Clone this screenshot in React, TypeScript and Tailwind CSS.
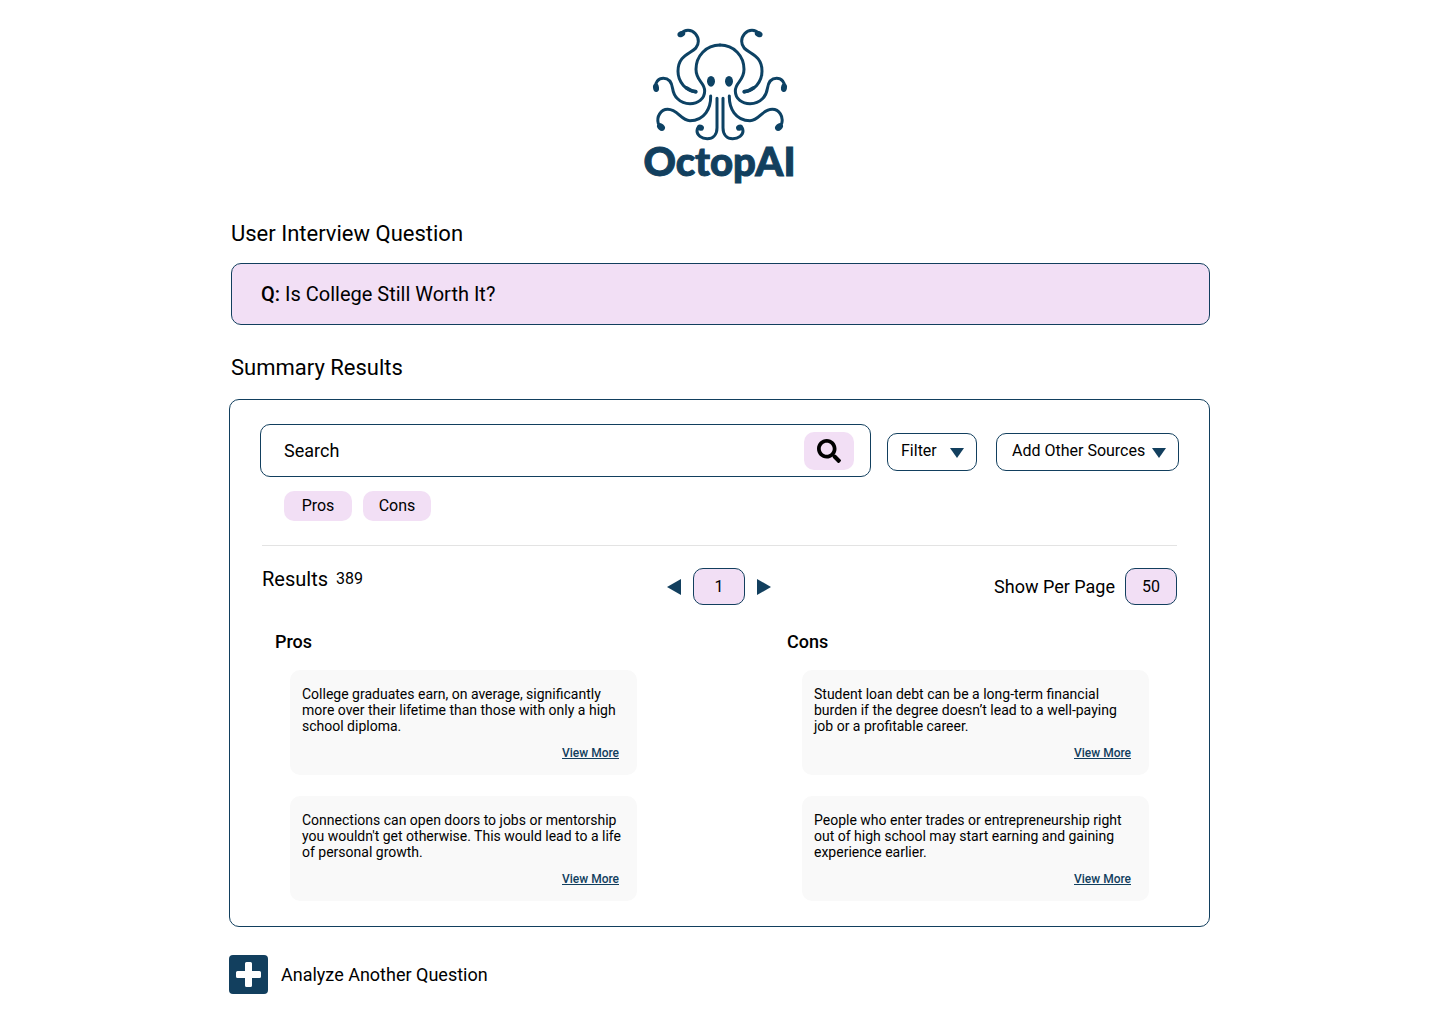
import React from "react";
import { FaSearch } from "react-icons/fa";

function Tentacles() {
  return (
    <g>
      <path d="M240 75C198 75 168 108 168 148C168 184 194 186 194 213C194 237 173 251 150 251C117 251 101 227 98 206C95 186 86 175 70 175C55 175 45 187 46 203" />
      <path d="M124 41C130 33 137 31 144 31C162 31 175 47 175 64C175 104 114 92 114 154C114 188 139 212 168 216" />
      <path d="M167 215C157 214 148 210 140 204" strokeWidth="11" />
      <path d="M212 228C213 264 194 302 150 302C122 302 114 268 83 268C62 268 49 290 55 311" />
      <path d="M231 235V323C231 345 218 356 202 356C184 356 171 345 171 333C171 326 175 322 182 322" />
      <ellipse cx="124" cy="42" rx="12" ry="9" transform="rotate(-24 124 42)" fill="#0d4264" stroke="none" />
      <ellipse cx="48" cy="203" rx="9" ry="13" transform="rotate(-8 48 203)" fill="#0d4264" stroke="none" />
      <ellipse cx="63" cy="321" rx="10" ry="13" transform="rotate(-48 63 321)" fill="#0d4264" stroke="none" />
      <ellipse cx="181" cy="323" rx="11" ry="9" transform="rotate(20 181 323)" fill="#0d4264" stroke="none" />
      <ellipse cx="213" cy="184" rx="12" ry="16" fill="#0d4264" stroke="none" />
    </g>
  );
}

function Logo() {
  return (
    <div className="flex flex-col items-center text-[#123f5e]">
      <svg viewBox="0 0 480 366" className="h-[122px] w-40" fill="none" stroke="#0d4264" strokeWidth="9" strokeLinecap="round" aria-hidden="true">
        <Tentacles />
        <g transform="translate(480 0) scale(-1 1)">
          <Tentacles />
        </g>
      </svg>
      <h1 className="-mt-[5px] font-['Lato',sans-serif] text-[40px] leading-[48px] font-black [-webkit-text-stroke:1px_#123f5e]">OctopAI</h1>
    </div>
  );
}

function Triangle({ direction }: { direction: "down" | "left" | "right" }) {
  const points = { down: "0,2 14,2 7,12", left: "14,0 14,16 0,8", right: "0,0 0,16 14,8" };
  return (
    <svg viewBox={direction === "down" ? "0 0 14 14" : "0 0 14 16"} className="w-3.5" fill="#123f5e" aria-hidden="true">
      <polygon points={points[direction]} />
    </svg>
  );
}

function Dropdown({ label, className }: { label: string; className: string }) {
  return (
    <div className={"relative h-[38px] shrink-0 " + className}>
      <select
        aria-label={label}
        className="h-full w-full appearance-none rounded-[10px] border border-[#123f5e] bg-white pr-7 pb-0.5 text-base leading-6"
      >
        <option>{label}</option>
      </select>
      <span className="pointer-events-none absolute top-[13px] right-[13px]">
        <Triangle direction="down" />
      </span>
    </div>
  );
}

function ResultColumn({ title, items }: { title: string; items: string[] }) {
  return (
    <section>
      <h3 className="text-lg leading-6 font-medium">{title}</h3>
      <ul className="mt-4 ml-[15px] flex flex-col gap-[21px]">
        {items.map((item) => (
          <li key={item} className="rounded-[10px] bg-[#f9f9f9] pt-4 pb-3.5 pl-3">
            <p className="pr-3 text-sm leading-4">{item}</p>
            <div className="mt-[11px] pr-[18px] text-right text-xs leading-4 font-medium text-[#123f5e]">
              <a href="#more" className="underline">View More</a>
            </div>
          </li>
        ))}
      </ul>
    </section>
  );
}

const pros = [
  "College graduates earn, on average, significantly more over their lifetime than those with only a high school diploma.",
  "Connections can open doors to jobs or mentorship you wouldn't get otherwise. This would lead to a life of personal growth.",
];
const cons = [
  "Student loan debt can be a long-term financial burden if the degree doesn’t lead to a well-paying job or a profitable career.",
  "People who enter trades or entrepreneurship right out of high school may start earning and gaining experience earlier.",
];

const numberBox = "h-[37px] w-[52px] rounded-[10px] border border-[#123f5e] bg-[#f2dff5] text-center text-base";

export default function App() {
  return (
    <main className="min-h-screen bg-white pt-5 pb-7 font-['Roboto',sans-serif] text-black">
      <div className="mx-auto max-w-[982px] pr-px">
        <Logo />

        <h2 className="mt-[35px] ml-0.5 text-[22px] leading-7">User Interview Question</h2>
        <div className="mt-[15px] ml-0.5 rounded-[10px] border border-[#123f5e] bg-[#f2dff5] px-[29px] py-4 text-xl leading-7">
          <span className="font-medium">Q:</span> Is College Still Worth It?
        </div>

        <h2 className="mt-[29px] ml-0.5 text-[22px] leading-7">Summary Results</h2>
        <div className="mt-[17px] rounded-[10px] border border-[#123f5e] px-[30px] pt-6 pb-[25px]">
          <form className="flex items-end" onSubmit={(e) => e.preventDefault()}>
            <div className="flex h-[53px] min-w-0 flex-1 items-center rounded-[10px] border border-[#123f5e] pr-4 pl-[23px]">
              <input
                type="search"
                aria-label="Search"
                placeholder="Search"
                className="min-w-0 flex-1 text-lg leading-6 outline-none placeholder:text-black"
              />
              <button type="submit" aria-label="Submit search" className="flex h-[38px] w-[50px] items-center justify-center rounded-[10px] bg-[#f2dff5]">
                <FaSearch className="size-6" />
              </button>
            </div>
            <div className="ml-4 flex gap-[19px] pb-1.5">
              <Dropdown label="Filter" className="w-[90px] *:[select]:pl-[13px]" />
              <Dropdown label="Add Other Sources" className="w-[183px] *:[select]:pl-[15px]" />
            </div>
          </form>

          <div className="mt-3.5 ml-6 flex gap-[11px]">
            <button type="button" className="h-[30px] w-[68px] rounded-[10px] bg-[#f2dff5] text-base leading-6">Pros</button>
            <button type="button" className="h-[30px] w-[68px] rounded-[10px] bg-[#f2dff5] text-base leading-6">Cons</button>
          </div>

          <hr className="mx-0.5 mt-6 border-[#e3e3e3]" />

          <div className="mx-0.5 mt-[22px] grid grid-cols-[1fr_auto_1fr] items-start">
            <p className="flex items-center gap-2 text-xl leading-[22px]">
              Results <span className="text-base leading-[22px]">389</span>
            </p>
            <div className="flex items-center gap-3 pr-px">
              <button type="button" aria-label="Previous page"><Triangle direction="left" /></button>
              <input aria-label="Page" defaultValue="1" className={numberBox} />
              <button type="button" aria-label="Next page"><Triangle direction="right" /></button>
            </div>
            <label className="flex items-center justify-end gap-2.5 text-lg">
              Show Per Page
              <input defaultValue="50" className={numberBox} />
            </label>
          </div>

          <div className="mt-[25px] grid grid-cols-2 gap-[150px] pr-[30px] pl-[15px]">
            <ResultColumn title="Pros" items={pros} />
            <ResultColumn title="Cons" items={cons} />
          </div>
        </div>

        <button type="button" className="mt-7 flex items-center gap-[13px] text-lg">
          <svg viewBox="0 0 39 39" className="size-[39px]" aria-hidden="true">
            <rect width="39" height="39" rx="4" fill="#123f5e" />
            <path d="M16 8.500a1.500 1.500 0 0 1 1.500-1.500h4a1.500 1.500 0 0 1 1.500 1.500V16h7.500a1.500 1.500 0 0 1 1.500 1.500v4a1.500 1.500 0 0 1-1.500 1.500H23v7.500a1.500 1.500 0 0 1-1.500 1.500h-4a1.500 1.500 0 0 1-1.500-1.500V23H8.500A1.500 1.500 0 0 1 7 21.500v-4A1.500 1.500 0 0 1 8.500 16H16z" fill="#fff" />
          </svg>
          Analyze Another Question
        </button>
      </div>
    </main>
  );
}
